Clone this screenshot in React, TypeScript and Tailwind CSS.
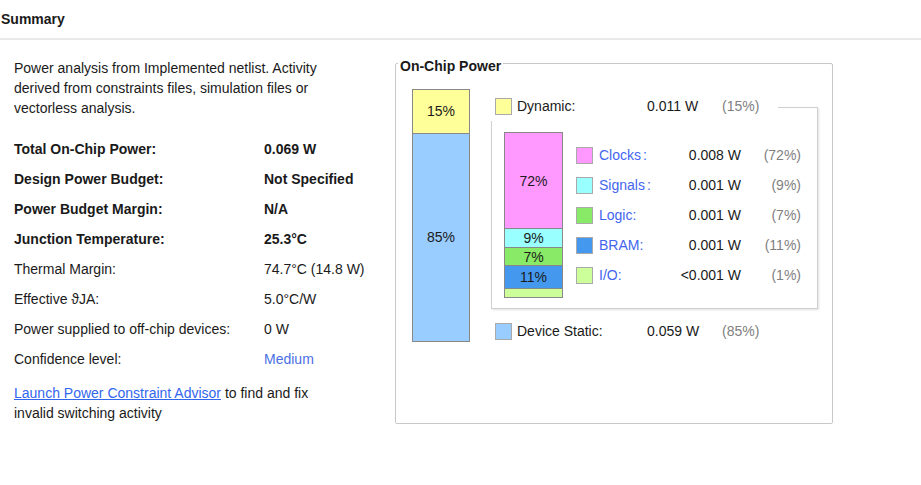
const font = { fontFamily: '"Liberation Sans", Arial, sans-serif' };

type Row = { label: string; value: string; bold?: boolean; link?: boolean };

const rows: Row[] = [
  { label: "Total On-Chip Power:", value: "0.069 W", bold: true },
  { label: "Design Power Budget:", value: "Not Specified", bold: true },
  { label: "Power Budget Margin:", value: "N/A", bold: true },
  { label: "Junction Temperature:", value: "25.3°C", bold: true },
  { label: "Thermal Margin:", value: "74.7°C (14.8 W)" },
  { label: "Effective ϑJA:", value: "5.0°C/W" },
  { label: "Power supplied to off-chip devices:", value: "0 W" },
  { label: "Confidence level:", value: "Medium", link: true },
];

type Part = { name: string; value: string; pct: string; color: string; spaced?: boolean };

const parts: Part[] = [
  { name: "Clocks", value: "0.008 W", pct: "(72%)", color: "bg-[#ff99ff]", spaced: true },
  { name: "Signals", value: "0.001 W", pct: "(9%)", color: "bg-[#99ffff]", spaced: true },
  { name: "Logic", value: "0.001 W", pct: "(7%)", color: "bg-[#88ea66]" },
  { name: "BRAM", value: "0.001 W", pct: "(11%)", color: "bg-[#4499ee]" },
  { name: "I/O", value: "<0.001 W", pct: "(1%)", color: "bg-[#ccff99]" },
];

function Swatch({ color }: { color: string }) {
  return <div className={`w-[17px] h-[17px] border border-[#aaaaaa] shrink-0 ${color}`} />;
}

export default function App() {
  return (
    <div className="w-[921px] h-[485px] bg-white text-[#1a1a1a] text-[14px] overflow-hidden" style={font}>
      <div className="h-[40px] flex items-center pl-[1px] font-bold border-b-2 border-[#e9e9e9]">Summary</div>
      <div className="flex">
        <div className="w-[395px] shrink-0 pl-[14px] pt-[18px]">
          <p className="max-w-[345px] leading-[20px]">
            Power analysis from Implemented netlist. Activity derived from constraints files, simulation files or
            vectorless analysis.
          </p>
          <div className="mt-[16px]">
            {rows.map((r) => (
              <div key={r.label} className={`grid grid-cols-[250px_1fr] h-[30px] items-center ${r.bold ? "font-bold" : ""}`}>
                <span>{r.label}</span>
                <span className={r.link ? "text-[#4a6fe3]" : ""}>{r.value}</span>
              </div>
            ))}
          </div>
          <p className="mt-[9px] leading-[20px] max-w-[330px]">
            <span className="text-[#3366ee] underline">Launch Power Constraint Advisor</span> to find and fix invalid
            switching activity
          </p>
        </div>

        <fieldset className="mt-[12px] w-[438px] h-[372px] border border-[#c8c8c8] rounded-[2px]">
          <legend className="ml-[2px] px-[2px] pt-[6px] font-bold leading-[16px]">On-Chip Power</legend>
          <div className="flex items-start pl-[16px] pt-[15px]">
            <div className="w-[58px] h-[253px] border border-[#888888] flex flex-col shrink-0">
              <div className="h-[44px] bg-[#ffff99] border-b border-[#888888] flex items-center justify-center">15%</div>
              <div className="flex-1 bg-[#99ccff] flex items-center justify-center">85%</div>
            </div>

            <div className="relative ml-[21px] pt-[18px] w-[327px]">
              <div className="border border-[#d0d0d0] h-[202px] shadow-[1px_1px_2px_rgba(0,0,0,0.12)] flex items-start pl-[12px] pt-[24px]">
                <div className="w-[59px] h-[166px] border border-[#888888] flex flex-col shrink-0 leading-none">
                  <div className="h-[96px] bg-[#ff99ff] border-b border-[#888888] flex items-center justify-center">72%</div>
                  <div className="h-[19px] bg-[#99ffff] border-b border-[#888888] flex items-center justify-center">9%</div>
                  <div className="h-[18px] bg-[#88ea66] border-b border-[#888888] flex items-center justify-center">7%</div>
                  <div className="h-[23px] bg-[#4499ee] border-b border-[#888888] flex items-center justify-center">11%</div>
                  <div className="flex-1 bg-[#ccff99]" />
                </div>
                <div className="ml-[13px] mt-[8px]">
                  {parts.map((p) => (
                    <div key={p.name} className="flex items-center h-[30px]">
                      <Swatch color={p.color} />
                      <span className="ml-[6px] w-[70px] text-[#4466ee]">
                        {p.name}
                        <span className={p.spaced ? "ml-[2px]" : ""}>:</span>
                      </span>
                      <span className="w-[72px] text-right">{p.value}</span>
                      <span className="w-[60px] text-right text-[#808080]">{p.pct}</span>
                    </div>
                  ))}
                </div>
              </div>

              <div className="absolute left-[-1px] top-[5px] w-[288px] h-[27px] bg-white flex items-center pb-[3px] pl-[5px]">
                <Swatch color="bg-[#ffff99]" />
                <span className="ml-[5px] w-[130px]">Dynamic:</span>
                <span className="w-[75px]">0.011 W</span>
                <span className="text-[#808080]">(15%)</span>
              </div>

              <div className="flex items-center h-[24px] mt-[10px] pl-[4px]">
                <Swatch color="bg-[#99ccff]" />
                <span className="ml-[5px] w-[130px]">Device Static:</span>
                <span className="w-[75px]">0.059 W</span>
                <span className="text-[#808080]">(85%)</span>
              </div>
            </div>
          </div>
        </fieldset>
      </div>
    </div>
  );
}
